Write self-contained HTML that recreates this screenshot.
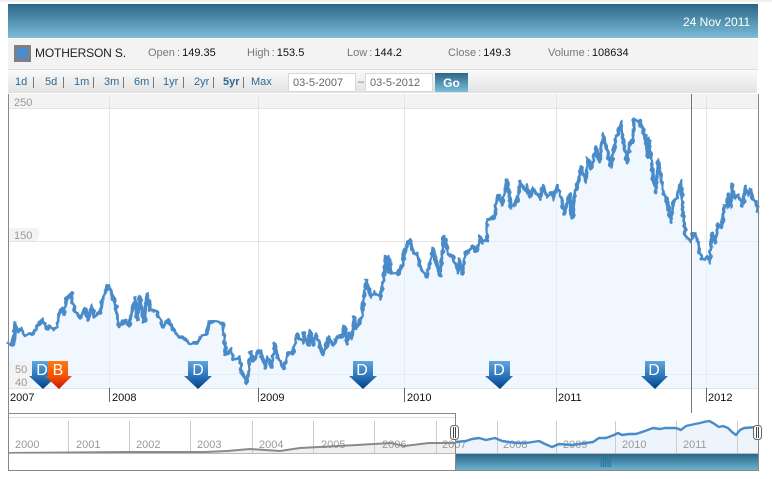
<!DOCTYPE html>
<html><head><meta charset="utf-8">
<style>
html,body{margin:0;padding:0;background:#fff;width:772px;height:479px;overflow:hidden}
body{position:relative;font-family:"Liberation Sans",sans-serif;font-size:11px}
.a{position:absolute;white-space:nowrap}
.l{color:#777;word-spacing:-1px}.v{color:#111}
.n{position:absolute;top:76px;color:#2c6a93;font-size:11px;line-height:13px}
.s{position:absolute;top:77px;width:1px;height:11px;background:#777}
.i{position:absolute;top:73px;width:66px;height:17px;background:#fff;border:1px solid #d8d8d8;color:#666;font-size:11px;line-height:18px;text-indent:4px}
svg{position:absolute;left:0;top:0}
svg text{font-family:"Liberation Sans",sans-serif}
</style></head><body>
<div class="a" style="left:0;top:0;width:772px;height:2px;background:#f0f0f0"></div>
<div class="a" style="left:8px;top:4px;width:750px;height:34px;background:linear-gradient(#2b6688,#7cbdd8)"></div>
<div class="a" style="left:683px;top:15px;color:#fff;font-size:12px;line-height:14px">24 Nov 2011</div>
<div class="a" style="left:8px;top:39px;width:750px;height:30px;background:#f3f3f3;border-bottom:1px solid #ddd"></div>
<div class="a" style="left:14px;top:45px;width:11px;height:11px;border:3px solid #808080;background:#4a8ccc"></div>
<div class="a" style="left:35px;top:46px;color:#222;font-size:12px;line-height:14px;letter-spacing:-.15px">MOTHERSON S.</div>
<div class="a" style="left:148px;top:47px;line-height:13px"><span class="l">Open : </span><span class="v">149.35</span></div>
<div class="a" style="left:247px;top:47px;line-height:13px"><span class="l">High : </span><span class="v">153.5</span></div>
<div class="a" style="left:347px;top:47px;line-height:13px"><span class="l">Low : </span><span class="v">144.2</span></div>
<div class="a" style="left:448px;top:47px;line-height:13px"><span class="l">Close : </span><span class="v">149.3</span></div>
<div class="a" style="left:548px;top:47px;line-height:13px"><span class="l">Volume : </span><span class="v">108634</span></div>
<div class="a" style="left:8px;top:70px;width:749px;height:23px;background:linear-gradient(#fafafa,#e2e2e2)"></div>
<div class="n" style="left:15px">1d</div><div class="s" style="left:33px"></div>
<div class="n" style="left:45px">5d</div><div class="s" style="left:63px"></div>
<div class="n" style="left:74px">1m</div><div class="s" style="left:93px"></div>
<div class="n" style="left:104px">3m</div><div class="s" style="left:123px"></div>
<div class="n" style="left:134px">6m</div><div class="s" style="left:153px"></div>
<div class="n" style="left:163px">1yr</div><div class="s" style="left:183px"></div>
<div class="n" style="left:194px">2yr</div><div class="s" style="left:213px"></div>
<div class="n" style="left:223px;font-weight:bold">5yr</div><div class="s" style="left:243px"></div>
<div class="n" style="left:251px">Max</div>
<div class="i" style="left:288px">03-5-2007</div>
<div class="a" style="left:358px;top:76px;color:#777;line-height:13px">–</div>
<div class="i" style="left:365px">03-5-2012</div>
<div class="a" style="left:435px;top:73px;width:33px;height:19px;background:linear-gradient(#2b6688,#7cbdd8);color:#fff;font-weight:bold;font-size:12px;line-height:20px;text-align:center">Go</div>
<svg width="772" height="479" viewBox="0 0 772 479" xmlns="http://www.w3.org/2000/svg">
<defs>
<linearGradient id="d" x1="0" y1="0" x2="0" y2="1"><stop offset="0" stop-color="#62a5dc"/><stop offset=".55" stop-color="#2a73b8"/><stop offset="1" stop-color="#003f88"/></linearGradient>
<linearGradient id="b" x1="0" y1="0" x2="0" y2="1"><stop offset="0" stop-color="#ff7a10"/><stop offset=".55" stop-color="#f55300"/><stop offset="1" stop-color="#c81400"/></linearGradient>
<linearGradient id="t" x1="0" y1="0" x2="0" y2="1"><stop offset="0" stop-color="#2b6688"/><stop offset="1" stop-color="#6cb2cf"/></linearGradient>
<filter id="rough" filterUnits="userSpaceOnUse" x="0" y="90" width="772" height="310"><feTurbulence type="fractalNoise" baseFrequency=".22" numOctaves="1" seed="4" result="n"/><feDisplacementMap in="SourceGraphic" in2="n" scale="5" xChannelSelector="R" yChannelSelector="G"/></filter>
</defs>
<rect x="9" y="94" width="749" height="14" fill="#f3f3f3"/>
<g stroke="#e4e4e4" stroke-width="1" fill="none">
<path d="M8.5 108.5H758M8 241.5H758M8 374.5H758M8 388.5H758"/>
<path d="M109.5 94V388M258.5 94V388M404.5 94V388M556.5 94V388M706.5 94V388"/>
</g>
<path id="fill" fill="#e6f2fe" fill-opacity=".6" d="M7 342L13 345L15 323L18 333L21 328L25 335L33 334L37 326L42 320L47 329L50 325L53 330L57 327L59 315L62 308L64 315L66 300L71 293L74 308L80 318L86 309L88 320L92 306L94 317L100 312L103 297L108 285L115 302L119 327L125 320L129 326L135 298L137 320L140 297L144 322L147 294L150 310L157 312L163 327L168 320L175 333L185 340L191 344L198 342L202 335L207 333L209 322L220 321L223 325L226 355L231 348L233 360L239 357L242 373L247 383L251 352L253 361L260 350L265 367L267 357L272 367L275 343L278 358L284 369L288 353L293 353L297 334L303 343L304 333L309 346L310 331L313 345L316 334L323 355L329 337L333 346L337 337L342 336L344 327L347 344L349 333L352 339L354 316L356 329L362 316L366 280L371 297L375 292L380 299L383 283L386 257L388 273L389 257L391 273L398 274L403 263L405 248L410 240L413 253L417 253L420 267L427 277L433 249L440 276L444 236L448 254L453 257L458 273L459 259L463 274L465 255L473 246L477 251L480 237L483 243L487 240L487 220L495 217L496 203L499 195L502 205L507 180L511 208L518 200L520 182L527 193L527 185L530 197L533 188L540 199L543 185L547 197L552 192L553 199L557 185L562 200L564 214L568 200L570 193L572 218L575 193L578 183L581 167L586 183L588 158L591 168L596 147L599 162L603 134L607 150L611 167L615 142L621 122L622 132L627 163L630 143L633 140L634 120L639 120L645 135L648 157L649 138L653 175L656 192L658 160L661 178L663 192L667 200L671 222L673 202L677 197L681 180L683 213L686 238L691 242L693 233L696 235L701 258L705 260L707 257L710 262L712 233L715 243L718 224L722 228L724 205L727 207L728 195L731 207L732 185L735 198L738 195L743 206L745 186L748 195L751 189L753 200L756 202L758 213V388H9V342Z"/>
<path d="M9 361H32V388H9Z" fill="#f3f3f3"/>
<path d="M9 228H37q5 6 0 13H9Z" fill="#f3f3f3"/>
<path filter="url(#rough)" d="M7 342L13 345L15 323L18 333L21 328L25 335L33 334L37 326L42 320L47 329L50 325L53 330L57 327L59 315L62 308L64 315L66 300L71 293L74 308L80 318L86 309L88 320L92 306L94 317L100 312L103 297L108 285L115 302L119 327L125 320L129 326L135 298L137 320L140 297L144 322L147 294L150 310L157 312L163 327L168 320L175 333L185 340L191 344L198 342L202 335L207 333L209 322L220 321L223 325L226 355L231 348L233 360L239 357L242 373L247 383L251 352L253 361L260 350L265 367L267 357L272 367L275 343L278 358L284 369L288 353L293 353L297 334L303 343L304 333L309 346L310 331L313 345L316 334L323 355L329 337L333 346L337 337L342 336L344 327L347 344L349 333L352 339L354 316L356 329L362 316L366 280L371 297L375 292L380 299L383 283L386 257L388 273L389 257L391 273L398 274L403 263L405 248L410 240L413 253L417 253L420 267L427 277L433 249L440 276L444 236L448 254L453 257L458 273L459 259L463 274L465 255L473 246L477 251L480 237L483 243L487 240L487 220L495 217L496 203L499 195L502 205L507 180L511 208L518 200L520 182L527 193L527 185L530 197L533 188L540 199L543 185L547 197L552 192L553 199L557 185L562 200L564 214L568 200L570 193L572 218L575 193L578 183L581 167L586 183L588 158L591 168L596 147L599 162L603 134L607 150L611 167L615 142L621 122L622 132L627 163L630 143L633 140L634 120L639 120L645 135L648 157L649 138L653 175L656 192L658 160L661 178L663 192L667 200L671 222L673 202L677 197L681 180L683 213L686 238L691 242L693 233L696 235L701 258L705 260L707 257L710 262L712 233L715 243L718 224L722 228L724 205L727 207L728 195L731 207L732 185L735 198L738 195L743 206L745 186L748 195L751 189L753 200L756 202L758 213" fill="none" stroke="#4a8bc9" stroke-width="3.4" stroke-linejoin="round"/>
<g fill="#999" font-size="11">
<text x="14" y="106">250</text><text x="14" y="239">150</text><text x="15" y="373">50</text><text x="15" y="386">40</text>
</g>
<g fill="#fff" font-size="16" text-anchor="middle">
<path d="M32 361H53V376H57L43 389L29 376H32Z" fill="url(#d)"/><text x="42" y="375">D</text>
<path d="M48 361H68V376H72L59 389L45 376H48Z" fill="url(#b)"/><text x="58" y="375">B</text>
<path d="M188 361H208V376H212L198 389L184 376H188Z" fill="url(#d)"/><text x="198" y="375">D</text>
<path d="M353 361H373V376H377L363 389L349 376H353Z" fill="url(#d)"/><text x="362" y="375">D</text>
<path d="M489 361H510V376H513L500 389L485 376H489Z" fill="url(#d)"/><text x="499" y="375">D</text>
<path d="M645 361H665V376H668L655 389L641 376H645Z" fill="url(#d)"/><text x="654" y="375">D</text>
</g>
<path d="M109.5 388V402M258.5 388V402M404.5 388V402M556.5 388V402M706.5 388V402M8.5 388V402" stroke="#666" stroke-width="1"/>
<g fill="#111" font-size="11">
<text x="10" y="401">2007</text><text x="112" y="401">2008</text><text x="260" y="401">2009</text><text x="407" y="401">2010</text><text x="558" y="401">2011</text><text x="708" y="401">2012</text>
</g>
<path d="M691.5 94V413" stroke="#777" stroke-width="1"/>
<path d="M456 442L479 438L486 440L495 438L509 442L526 443L539 441L552 447L559 444L586 443L599 438L614 435L618 433L629 434L653 428L676 428L686 426L709 421L719 427L728 428L736 435L744 428L758 427V453H456Z" fill="#edf4fb"/>
<path d="M9 453L227 451L250 449L280 451L300 448L357 445L391 443L404 446L429 443L455 443V453H9Z" fill="#efefef"/>
<path d="M9 417.5H455" stroke="#ddd"/>
<path d="M68.5 421V453M129.5 421V453M190.5 421V453M252.5 421V453M313.5 421V453M374.5 421V453M436.5 421V453M497.5 421V453M556.5 421V453M615.5 421V453M676.5 421V453M737.5 421V453" stroke="#ccc"/>
<g fill="#999" font-size="11">
<text x="15" y="448">2000</text><text x="76" y="448">2001</text><text x="136" y="448">2002</text><text x="197" y="448">2003</text><text x="259" y="448">2004</text><text x="321" y="448">2005</text><text x="382" y="448">2006</text><text x="442" y="448">2007</text><text x="503" y="448">2008</text><text x="563" y="448">2009</text><text x="622" y="448">2010</text><text x="683" y="448">2011</text>
</g>
<path d="M8 453L130 452L205 452L227 451L250 449L280 451L300 448L357 445L391 443L404 446L429 443L455 443" fill="none" stroke="#8a8a8a" stroke-width="2"/>
<path d="M456 442L466 441L472 439L479 438L486 440L495 438L502 441L509 442L517 443L526 443L539 441L545 444L552 447L559 444L572 445L586 443L593 442L599 438L606 438L614 435L618 433L622 435L629 434L636 434L645 431L653 428L660 429L665 428L676 428L681 430L686 426L695 424L700 423L704 422L709 421L713 423L719 427L723 426L728 428L732 432L736 435L740 430L744 428L758 427" fill="none" stroke="#4a8bc9" stroke-width="2.4" stroke-linejoin="round"/>
<path d="M9 453.5H758" stroke="#bbb"/>
<rect x="456" y="454" width="302" height="16" fill="url(#t)"/>
<path d="M601.5 457V467M603.7 457V467M605.9 457V467M608.1 457V467M610.3 457V467" stroke="#2a7a9f" stroke-width="1.3"/>
<path d="M8.5 94V470.5H758.5V94" fill="none" stroke="#888" stroke-width="1"/>
<path d="M8 413.5H455.5V470" fill="none" stroke="#888" stroke-width="1"/>
<g fill="#fff" stroke="#666" stroke-width="1">
<rect x="450.5" y="425.5" width="8" height="14" rx="3"/>
<rect x="753.5" y="425.5" width="8" height="14" rx="3"/>
</g>
<path d="M453.5 427V438M455.5 427V438M756.5 427V438M758.5 427V438" stroke="#444" stroke-width="1"/>
</svg>
</body></html>
